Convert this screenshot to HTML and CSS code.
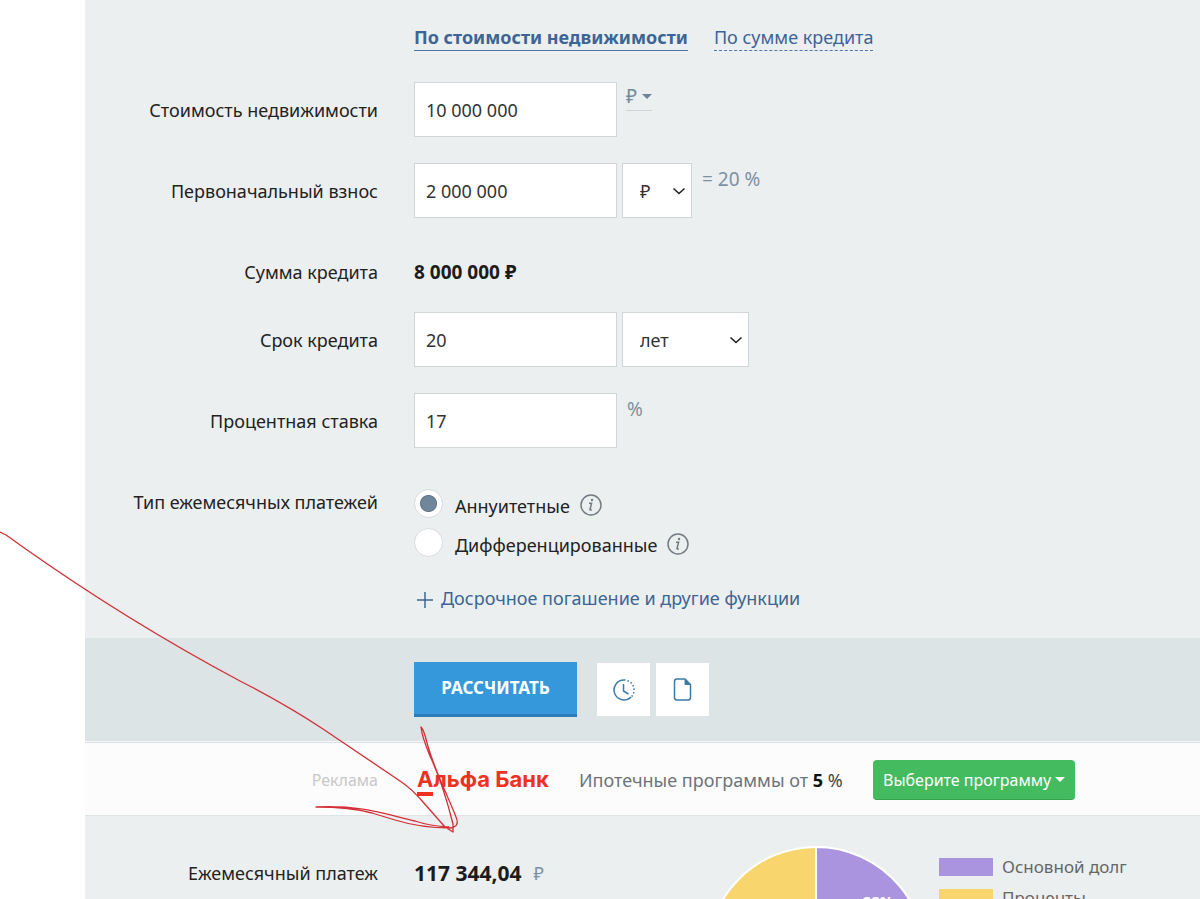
FILE: index.html
```html
<!DOCTYPE html>
<html lang="ru">
<head>
<meta charset="utf-8">
<title>Ипотечный калькулятор</title>
<link rel="stylesheet" href="styles.css">
</head>
<body>
<main class="calculator">
  <form class="form">
    <nav class="tabs">
      <a class="tab tab-active" href="#cost">По стоимости недвижимости</a>
      <a class="tab" href="#sum">По сумме кредита</a>
    </nav>
    <div class="row">
      <label class="label" for="cost">Стоимость недвижимости</label>
      <div class="fields">
        <input class="input" id="cost" type="text" value="10 000 000">
        <button class="currency" type="button">₽<span class="caret"></span></button>
      </div>
    </div>
    <div class="row">
      <label class="label" for="down">Первоначальный взнос</label>
      <div class="fields">
        <input class="input" id="down" type="text" value="2 000 000">
        <span class="select-box select-short">
          <select class="select" aria-label="Единица взноса"><option>₽</option><option>%</option></select>
          <svg class="chevron" viewBox="0 0 14 8"><path d="M1.5 1.5 7 6.500 12.500 1.500"/></svg>
        </span>
        <span class="hint">= 20 %</span>
      </div>
    </div>
    <div class="row row-sum">
      <span class="label">Сумма кредита</span>
      <strong class="sum">8 000 000 ₽</strong>
    </div>
    <div class="row">
      <label class="label" for="term">Срок кредита</label>
      <div class="fields">
        <input class="input" id="term" type="text" value="20">
        <span class="select-box select-long">
          <select class="select" aria-label="Единица срока"><option>лет</option><option>месяцев</option></select>
          <svg class="chevron" viewBox="0 0 14 8"><path d="M1.5 1.5 7 6.500 12.500 1.500"/></svg>
        </span>
      </div>
    </div>
    <div class="row">
      <label class="label" for="rate">Процентная ставка</label>
      <div class="fields">
        <input class="input" id="rate" type="text" value="17">
        <span class="hint">%</span>
      </div>
    </div>
    <div class="row row-type" role="radiogroup" aria-labelledby="type-label">
      <span class="label" id="type-label">Тип ежемесячных платежей</span>
      <div class="options">
        <div class="option">
          <input class="radio" id="annuity" type="radio" name="type" checked>
          <label class="option-text" for="annuity">Аннуитетные</label>
          <svg class="info" viewBox="0 0 22 22"><circle cx="11" cy="11" r="10"/><path d="M9 9.300h2.600L10 15.500q-.2 1.100 1.800.1"/><circle class="info-dot" cx="12" cy="6" r="1.200"/></svg>
        </div>
        <div class="option">
          <input class="radio" id="diff" type="radio" name="type">
          <label class="option-text" for="diff">Дифференцированные</label>
          <svg class="info" viewBox="0 0 22 22"><circle cx="11" cy="11" r="10"/><path d="M9 9.300h2.600L10 15.500q-.2 1.100 1.800.1"/><circle class="info-dot" cx="12" cy="6" r="1.200"/></svg>
        </div>
      </div>
    </div>
    <a class="more" href="#more"><svg class="plus" viewBox="0 0 16 16"><path d="M8 0v16M0 8h16"/></svg>Досрочное погашение и другие функции</a>
  </form>

  <div class="actions">
    <button class="submit" type="button">РАССЧИТАТЬ</button>
    <div class="tools">
      <button class="tool" type="button" aria-label="История">
        <svg class="tool-icon" viewBox="0 0 24 24"><path d="M12 2a10 10 0 1 0 7.100 17.100"/><path class="dots" d="M12 2a10 10 0 0 1 7.100 17.100"/><path d="M11.500 6v7l5 3"/></svg>
      </button>
      <button class="tool" type="button" aria-label="Документ">
        <svg class="tool-icon" viewBox="0 0 24 24"><path d="M6 1h8l5.500 5.500v13A2.500 2.500 0 0 1 17 22H6a2.500 2.500 0 0 1-2.500-2.500v-16A2.500 2.500 0 0 1 6 1z"/><path class="fold" d="M14 1v5.500h5.500z"/></svg>
      </button>
    </div>
  </div>

  <section class="promo">
    <span class="promo-note">Реклама</span>
    <a class="brand" href="#bank"><span class="brand-letter">А</span>льфа Банк</a>
    <span class="promo-text">Ипотечные программы от <span class="promo-rate"><b>5</b> %</span></span>
    <button class="choose" type="button">Выберите программу<span class="caret caret-light"></span></button>
  </section>

  <section class="results">
    <span class="label label-result">Ежемесячный платеж</span>
    <span class="payment"><strong>117 344,04</strong><span class="ruble">₽</span></span>
    <svg class="pie" viewBox="0 0 220 220">
      <circle class="pie-interest" cx="110" cy="110" r="109"/>
      <path class="pie-debt" d="M110 110V1A109 109 0 0 1 216.600 132.700z"/>
      <text class="pie-text" x="172" y="61">28%</text>
    </svg>
    <ul class="legend">
      <li class="legend-item"><span class="swatch swatch-debt"></span>Основной долг</li>
      <li class="legend-item"><span class="swatch swatch-interest"></span>Проценты</li>
    </ul>
  </section>
</main>

<svg class="arrow" viewBox="0 0 1200 899" aria-hidden="true">
  <path d="M0 532L6 535Q12 539 20 545C92 596 165 641 240 681Q285 704 323 729L400 781Q412 789 423 802L445 827L453 832L453 824Q443 784 430 756Q422 737 421 727Q424 730 427 743C434 769 447 794 456 817Q460 826 451 828Q421 828 395 820L372 813Q350 807 316 807C362 805 385 814 415 821Q430 826 449 827"/>
</svg>
</body>
</html>
```

FILE: styles.css
```css
* { box-sizing: border-box; }
body {
  margin: 0;
  height: 100vh;
  overflow: hidden;
  background: #fff;
  color: #222;
  font: 18px/26px "Noto Sans", "Open Sans", sans-serif;
}
button, input, select { margin: 0; font: inherit; color: inherit; }
a { color: #3d6594; text-decoration: none; }
svg { flex: none; fill: none; }

.calculator { height: 100%; margin-left: 85px; overflow: hidden; background: #ebeff0; }
.form { padding: 24px 0 27px; }
.tabs { display: flex; gap: 26px; margin: 0 0 31px 329px; }
.tab { border-bottom: 1px dashed #5578a3; }
.tab-active { border-bottom: 1px solid #4f76a2; font-weight: 700; }

.row {
  display: grid;
  grid-template-columns: 293px 1fr;
  column-gap: 36px;
  align-items: center;
  margin-bottom: 26px;
}
.row-sum { min-height: 55px; margin-bottom: 13px; }
.label { text-align: right; }
.fields { display: flex; gap: 5px; }
.input {
  width: 203px;
  height: 55px;
  padding: 0 11px;
  border: 1px solid #d0d6d8;
  border-radius: 0;
  background: #fff;
  color: #333;
}
.select-box { position: relative; height: 55px; }
.select-short { width: 70px; }
.select-long { width: 127px; }
.select {
  appearance: none;
  width: 100%;
  height: 100%;
  padding: 0 17px;
  border: 1px solid #d0d6d8;
  border-radius: 0;
  background: #fff;
  color: #333;
}
.chevron {
  position: absolute;
  right: 6px;
  top: 24px;
  width: 14px;
  height: 8px;
  stroke: #222;
  stroke-width: 1.6;
  pointer-events: none;
}
.currency {
  display: flex;
  align-items: center;
  align-self: flex-start;
  gap: 5px;
  height: 29px;
  margin-left: 4px;
  padding: 0;
  border: 0;
  border-bottom: 1px solid #cfd5da;
  background: none;
  color: #75889c;
  font-size: 19px;
}
.caret {
  border: 5px solid transparent;
  border-top-color: #6d8499;
  border-bottom: 0;
}
.caret-light { border-top-color: #fff; }
.hint { margin: 3px 0 0 5px; color: #8090a3; font-size: 19px; }
.sum { color: #1c1c1c; font-size: 19px; }

.row-type { align-items: start; margin-bottom: 28px; padding-top: 15px; }
.options { display: grid; gap: 10px; }
.option { display: flex; align-items: center; height: 29px; }
.radio {
  appearance: none;
  flex: none;
  width: 29px;
  height: 29px;
  border: 1px solid #d6dbde;
  border-radius: 50%;
  background: #fff;
}
.radio:checked { background: radial-gradient(circle, #70879b 0 7px, #607486 8px, #fff 9px); }
.option-text { margin: 4px 10px 0 12px; }
.info { width: 22px; height: 22px; margin-top: 3px; stroke: #757b80; stroke-width: 1.5; }
.info-dot { fill: #757b80; stroke: none; }
.more { display: flex; align-items: center; gap: 8px; width: max-content; margin-left: 332px; }
.plus { width: 16px; height: 16px; margin-top: 3px; stroke: #3d6594; stroke-width: 1.5; }

.actions {
  display: flex;
  align-items: center;
  gap: 20px;
  padding: 24px 0 24px 329px;
  border-bottom: 1px solid #f5f8f9;
  background: #dde4e6;
}
.submit {
  width: 163px;
  height: 55px;
  padding: 0;
  border: 0;
  border-bottom: 3px solid #2a7db8;
  background: #3498db;
  color: #fff;
  font-size: 17px;
  font-weight: 700;
}
.tools { display: flex; gap: 6px; }
.tool {
  display: grid;
  place-items: center;
  width: 53px;
  height: 53px;
  padding: 0;
  border: 0;
  background: #fff;
}
.tool-icon { width: 24px; height: 24px; stroke: #3c7ba5; stroke-width: 1.5; }
.dots { stroke-dasharray: 1.5 2; }
.fold { fill: #3c7ba5; stroke-width: 1; }

.promo {
  display: flex;
  align-items: center;
  height: 74px;
  padding-top: 2px;
  border-top: 1px solid #d8e1e6;
  border-bottom: 1px solid #dfe4e6;
  background: #fcfcfc;
}
.promo-note { width: 293px; text-align: right; color: #c8c8c8; font-size: 16px; }
.brand {
  width: 130px;
  margin: 2px 32px 0 39px;
  color: #ef3124;
  font: 700 22px/26px Inter, sans-serif;
  white-space: nowrap;
}
.brand-letter { display: inline-block; border-bottom: 4px solid #ef3124; }
.promo-text { width: 266px; margin-right: 28px; color: #6c747b; white-space: nowrap; }
.promo-rate { color: #444; }
.promo-rate b { color: #111; }
.choose {
  display: flex;
  align-items: center;
  justify-content: space-between;
  width: 202px;
  height: 40px;
  padding: 0 10px;
  border: 0;
  border-bottom: 1px solid #36a34f;
  border-radius: 4px;
  background: #45bb5f;
  color: #fff;
  font-size: 16px;
  white-space: nowrap;
}

.results {
  display: flex;
  align-items: flex-start;
  padding-top: 30px;
}
.label-result { width: 293px; margin-right: 36px; padding-top: 14px; }
.payment { display: flex; gap: 12px; width: 292px; padding-top: 14px; }
.payment strong { color: #1c1c1c; font-size: 21px; }
.ruble { color: #8090a3; }
.pie { width: 220px; height: 220px; stroke: #fff; stroke-width: 2; }
.pie-interest { fill: #f9d56e; }
.pie-debt { fill: #ab94df; }
.pie-text { fill: #fff; stroke: none; font-size: 15px; font-weight: 700; text-anchor: middle; }
.legend {
  display: grid;
  gap: 5px;
  margin: 8px 0 0 13px;
  padding: 0;
  list-style: none;
  color: #666;
  font-size: 17px;
}
.legend-item { display: flex; align-items: center; gap: 9px; }
.swatch { width: 54px; height: 18px; }
.swatch-debt { background: #ab94df; }
.swatch-interest { background: #f9d56e; }

/* Hand-drawn arrow pointing at the monthly payment. */
.arrow {
  position: absolute;
  left: 0;
  top: 0;
  width: 1200px;
  height: 899px;
  stroke: #d32f36;
  stroke-width: 1.3;
  stroke-linejoin: round;
  pointer-events: none;
}
```
